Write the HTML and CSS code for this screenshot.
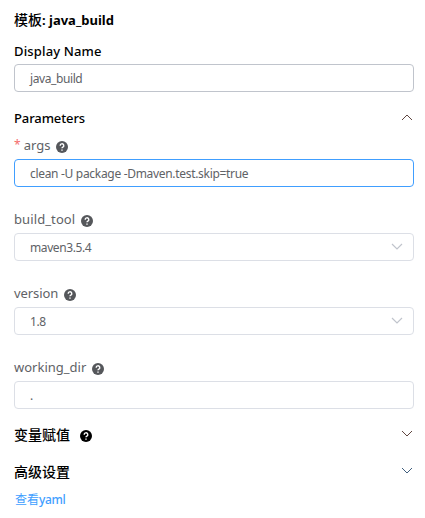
FILE: index.html
```html
<!DOCTYPE html>
<html lang="zh"><head><meta charset="utf-8"><title>java_build</title><link rel="stylesheet" href="styles.css"></head>
<body>
<main class="panel">
<h1 class="title"><span class="cjk">模板</span>: java_build</h1>
<label class="name-label"><span>Display Name</span></label>
<div class="input dark"><span>java_build</span></div>
<div class="section params"><span>Parameters</span><svg class="chev brown" viewBox="0 0 12 7"><path d="M1 6 6 1 11 6"/></svg></div>
<div class="label first"><span class="req">*</span><span>args</span><svg class="help" viewBox="0 0 12 12"><circle cx="6" cy="6" r="6"/><path d="M4.2 4.7a1.8 1.8 0 1 1 2.7 1.5Q6 6.7 6 7.3M6 8.6v1.1"/></svg></div>
<div class="input focus"><span>clean -U package -Dmaven.test.skip=true</span></div>
<div class="label wide"><span>build_tool</span><svg class="help" viewBox="0 0 12 12"><circle cx="6" cy="6" r="6"/><path d="M4.2 4.7a1.8 1.8 0 1 1 2.7 1.5Q6 6.7 6 7.3M6 8.6v1.1"/></svg></div>
<div class="input"><span>maven3.5.4</span><svg class="chev grey" viewBox="0 0 12 7"><path d="M1 1 6 6 11 1"/></svg></div>
<div class="label version"><span>version</span><svg class="help" viewBox="0 0 12 12"><circle cx="6" cy="6" r="6"/><path d="M4.2 4.7a1.8 1.8 0 1 1 2.7 1.5Q6 6.7 6 7.3M6 8.6v1.1"/></svg></div>
<div class="input"><span>1.8</span><svg class="chev grey" viewBox="0 0 12 7"><path d="M1 1 6 6 11 1"/></svg></div>
<div class="label"><span>working_dir</span><svg class="help" viewBox="0 0 12 12"><circle cx="6" cy="6" r="6"/><path d="M4.2 4.7a1.8 1.8 0 1 1 2.7 1.5Q6 6.7 6 7.3M6 8.6v1.1"/></svg></div>
<div class="input"><span>.</span></div>
<div class="section vars"><span class="cjk">变量赋值</span><svg class="help black" viewBox="0 0 12 12"><circle cx="6" cy="6" r="6"/><path d="M4.2 4.7a1.8 1.8 0 1 1 2.7 1.5Q6 6.7 6 7.3M6 8.6v1.1"/></svg><svg class="chev brown" viewBox="0 0 12 7"><path d="M1 1 6 6 11 1"/></svg></div>
<div class="section adv"><span class="cjk">高级设置</span><svg class="chev blue" viewBox="0 0 12 7"><path d="M1 1 6 6 11 1"/></svg></div>
<a class="link">查看<span class="yaml">yaml</span></a>
</main>
</body></html>
```
FILE: styles.css
```css
*{box-sizing:border-box}
body{margin:0;background:#fff;font-family:"Noto Sans","Noto Sans CJK SC",sans-serif;color:#000}
.panel{padding:10px 11px 0 14px;display:flex;flex-direction:column}
.title{margin:0;height:20px;line-height:20px;font-size:13px;font-weight:700;letter-spacing:0}
.cjk{font-size:14px;font-weight:500;line-height:20px;letter-spacing:0}
.name-label{height:34px;line-height:42px;font-size:13px;font-weight:500;letter-spacing:.15px}
.input{height:28px;width:400px;border:1px solid #dcdfe6;border-radius:4px;padding:0 11px 0 15px;display:flex;align-items:center;justify-content:space-between;font-size:12px;letter-spacing:-.4px;color:#606266}
.dark{border-color:#c0c4cc}
.focus{border-color:#409eff;letter-spacing:-.31px}
.section{display:flex;align-items:center;width:400px;font-size:13px;font-weight:500;padding-right:1px}
.params{height:52px;letter-spacing:-.1px}
.label{height:46px;padding-bottom:4px;display:flex;align-items:flex-end;font-size:13px;line-height:20px;color:#606266}
.wide{letter-spacing:.1px}
.version{letter-spacing:-.1px}
.first{height:15px}
.req{color:#f56c6c;margin-right:3px;font-size:12px}
.help{width:12px;height:12px;margin:0 0 2px 6px;fill:#55575b}
.help path{fill:none;stroke:#fff;stroke-width:1.4}
.black{fill:#000;margin:2px 0 0 10px}
.chev{width:12px;height:7px;margin-left:auto;fill:none;stroke-width:1}
.input .chev{margin-right:-1px;margin-bottom:1px}
.section .chev{margin-bottom:3px}
.brown{stroke:#604640}
.grey{stroke:#c0c4cc;stroke-width:1.2}
.blue{stroke:#405f7d}
.params .chev{margin-bottom:2px}
.vars{height:52px}
.adv{height:22px}
.link{font-size:12px;line-height:16px;color:#409eff;margin:9px 0 0 1px}
.yaml{font-weight:500;letter-spacing:-.4px}
```
